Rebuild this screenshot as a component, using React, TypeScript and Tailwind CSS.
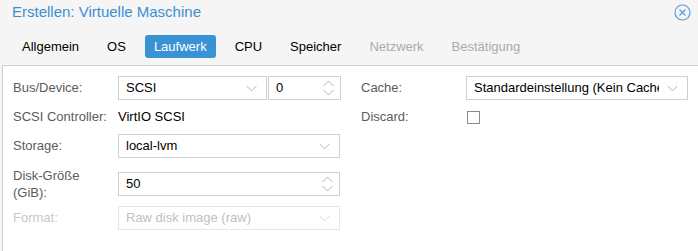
import React from 'react';

const Chevron = ({ className = '' }: { className?: string }) => (
    <svg width="11" height="7" viewBox="0 0 11 7" className={className}>
        <path d="M0.5 0.8 L5.5 5.8 L10.5 0.8" fill="none" stroke="#b5b5b5" strokeWidth="1" />
    </svg>
);

const Spinner = () => (
    <svg width="11" height="16" viewBox="0 0 11 16">
        <path d="M0.5 6 L5.5 1 L10.5 6" fill="none" stroke="#b5b5b5" strokeWidth="1" />
        <path d="M0.5 10 L5.5 15 L10.5 10" fill="none" stroke="#b5b5b5" strokeWidth="1" />
    </svg>
);

const tabs = [
    { label: 'Allgemein', state: 'normal' },
    { label: 'OS', state: 'normal' },
    { label: 'Laufwerk', state: 'active' },
    { label: 'CPU', state: 'normal' },
    { label: 'Speicher', state: 'normal' },
    { label: 'Netzwerk', state: 'disabled' },
    { label: 'Bestätigung', state: 'disabled' },
];

const Label = ({ children, disabled }: { children: React.ReactNode; disabled?: boolean }) => (
    <div className={`w-[105px] shrink-0 ${disabled ? 'text-[#c8c8c8]' : 'text-[#5c5c5c]'}`}>{children}</div>
);

const Select = ({ value, width, disabled }: { value: string; width: string; disabled?: boolean }) => (
    <div
        className={`${width} h-6 flex items-center justify-between pl-[7px] pr-[9px] border bg-white ${
            disabled ? 'border-[#e6e6e6] text-[#c0c0c0]' : 'border-[#cfcfcf] text-black'
        }`}
    >
        <span className="whitespace-nowrap overflow-hidden">{value}</span>
        <Chevron className={`shrink-0 ml-2 ${disabled ? 'opacity-50' : ''}`} />
    </div>
);

const NumberField = ({ value, width }: { value: string; width: string }) => (
    <div className={`${width} h-6 flex items-center justify-between pl-[7px] pr-[6px] border border-[#cfcfcf] bg-white text-black`}>
        <span>{value}</span>
        <Spinner />
    </div>
);

export default function App() {
    return (
        <div
            className="w-[698px] h-[251px] overflow-hidden bg-[#f5f5f5] text-[13px]"
            style={{ fontFamily: '"Liberation Sans", Arial, sans-serif' }}
        >
            {/* Header */}
            <div className="h-[24px] flex items-center justify-between pl-[12px] pr-[7px] pt-[1px]">
                <span className="text-[15px] text-[#3a8fd3]">Erstellen: Virtuelle Maschine</span>
                <svg width="17" height="17" viewBox="0 0 17 17">
                    <circle cx="8.5" cy="8.5" r="7.5" fill="none" stroke="#5a9fdc" strokeWidth="1.2" />
                    <path d="M5.5 5.5 L11.5 11.5 M11.5 5.5 L5.5 11.5" stroke="#5a9fdc" strokeWidth="1.2" />
                </svg>
            </div>

            {/* Tabs */}
            <div className="flex items-start gap-[10px] pl-[13px] pt-[11px] h-[41px]">
                {tabs.map((t) => (
                    <div
                        key={t.label}
                        className={`h-[23px] px-[9px] flex items-center rounded-[3px] ${
                            t.state === 'active'
                                ? 'bg-[#3892d4] text-white'
                                : t.state === 'disabled'
                                ? 'text-[#ababab]'
                                : 'text-black'
                        }`}
                    >
                        {t.label}
                    </div>
                ))}
            </div>

            {/* Panel */}
            <div className="ml-[2px] border-l border-t border-[#cfcfcf] bg-white h-[186px] pt-[10px] pl-[10px] flex gap-[21px]">
                {/* Left column */}
                <div className="flex flex-col gap-[5px] w-[327px]">
                    <div className="flex items-center h-6">
                        <Label>Bus/Device:</Label>
                        <div className="flex gap-[1px]">
                            <Select value="SCSI" width="w-[149px]" />
                            <NumberField value="0" width="w-[73px]" />
                        </div>
                    </div>
                    <div className="flex items-center h-6">
                        <Label>SCSI Controller:</Label>
                        <span className="text-black">VirtIO SCSI</span>
                    </div>
                    <div className="flex items-center h-6">
                        <Label>Storage:</Label>
                        <Select value="local-lvm" width="w-[222px]" />
                    </div>
                    <div className="flex items-start h-[38px]">
                        <div className="w-[105px] shrink-0 text-[#5c5c5c] leading-[17px] pt-[4px]">
                            Disk-Größe
                            <br />
                            (GiB):
                        </div>
                        <div className="mt-[9px]">
                            <NumberField value="50" width="w-[222px]" />
                        </div>
                    </div>
                    <div className="flex items-center h-6">
                        <Label disabled>Format:</Label>
                        <Select value="Raw disk image (raw)" width="w-[222px]" disabled />
                    </div>
                </div>

                {/* Right column */}
                <div className="flex flex-col gap-[5px]">
                    <div className="flex items-center h-6">
                        <Label>Cache:</Label>
                        <Select value="Standardeinstellung (Kein Cache)" width="w-[222px]" />
                    </div>
                    <div className="flex items-center h-6">
                        <Label>Discard:</Label>
                        <div className="ml-[1px] w-[13px] h-[13px] border border-[#8a8a8a] bg-white" />
                    </div>
                </div>
            </div>
        </div>
    );
}
